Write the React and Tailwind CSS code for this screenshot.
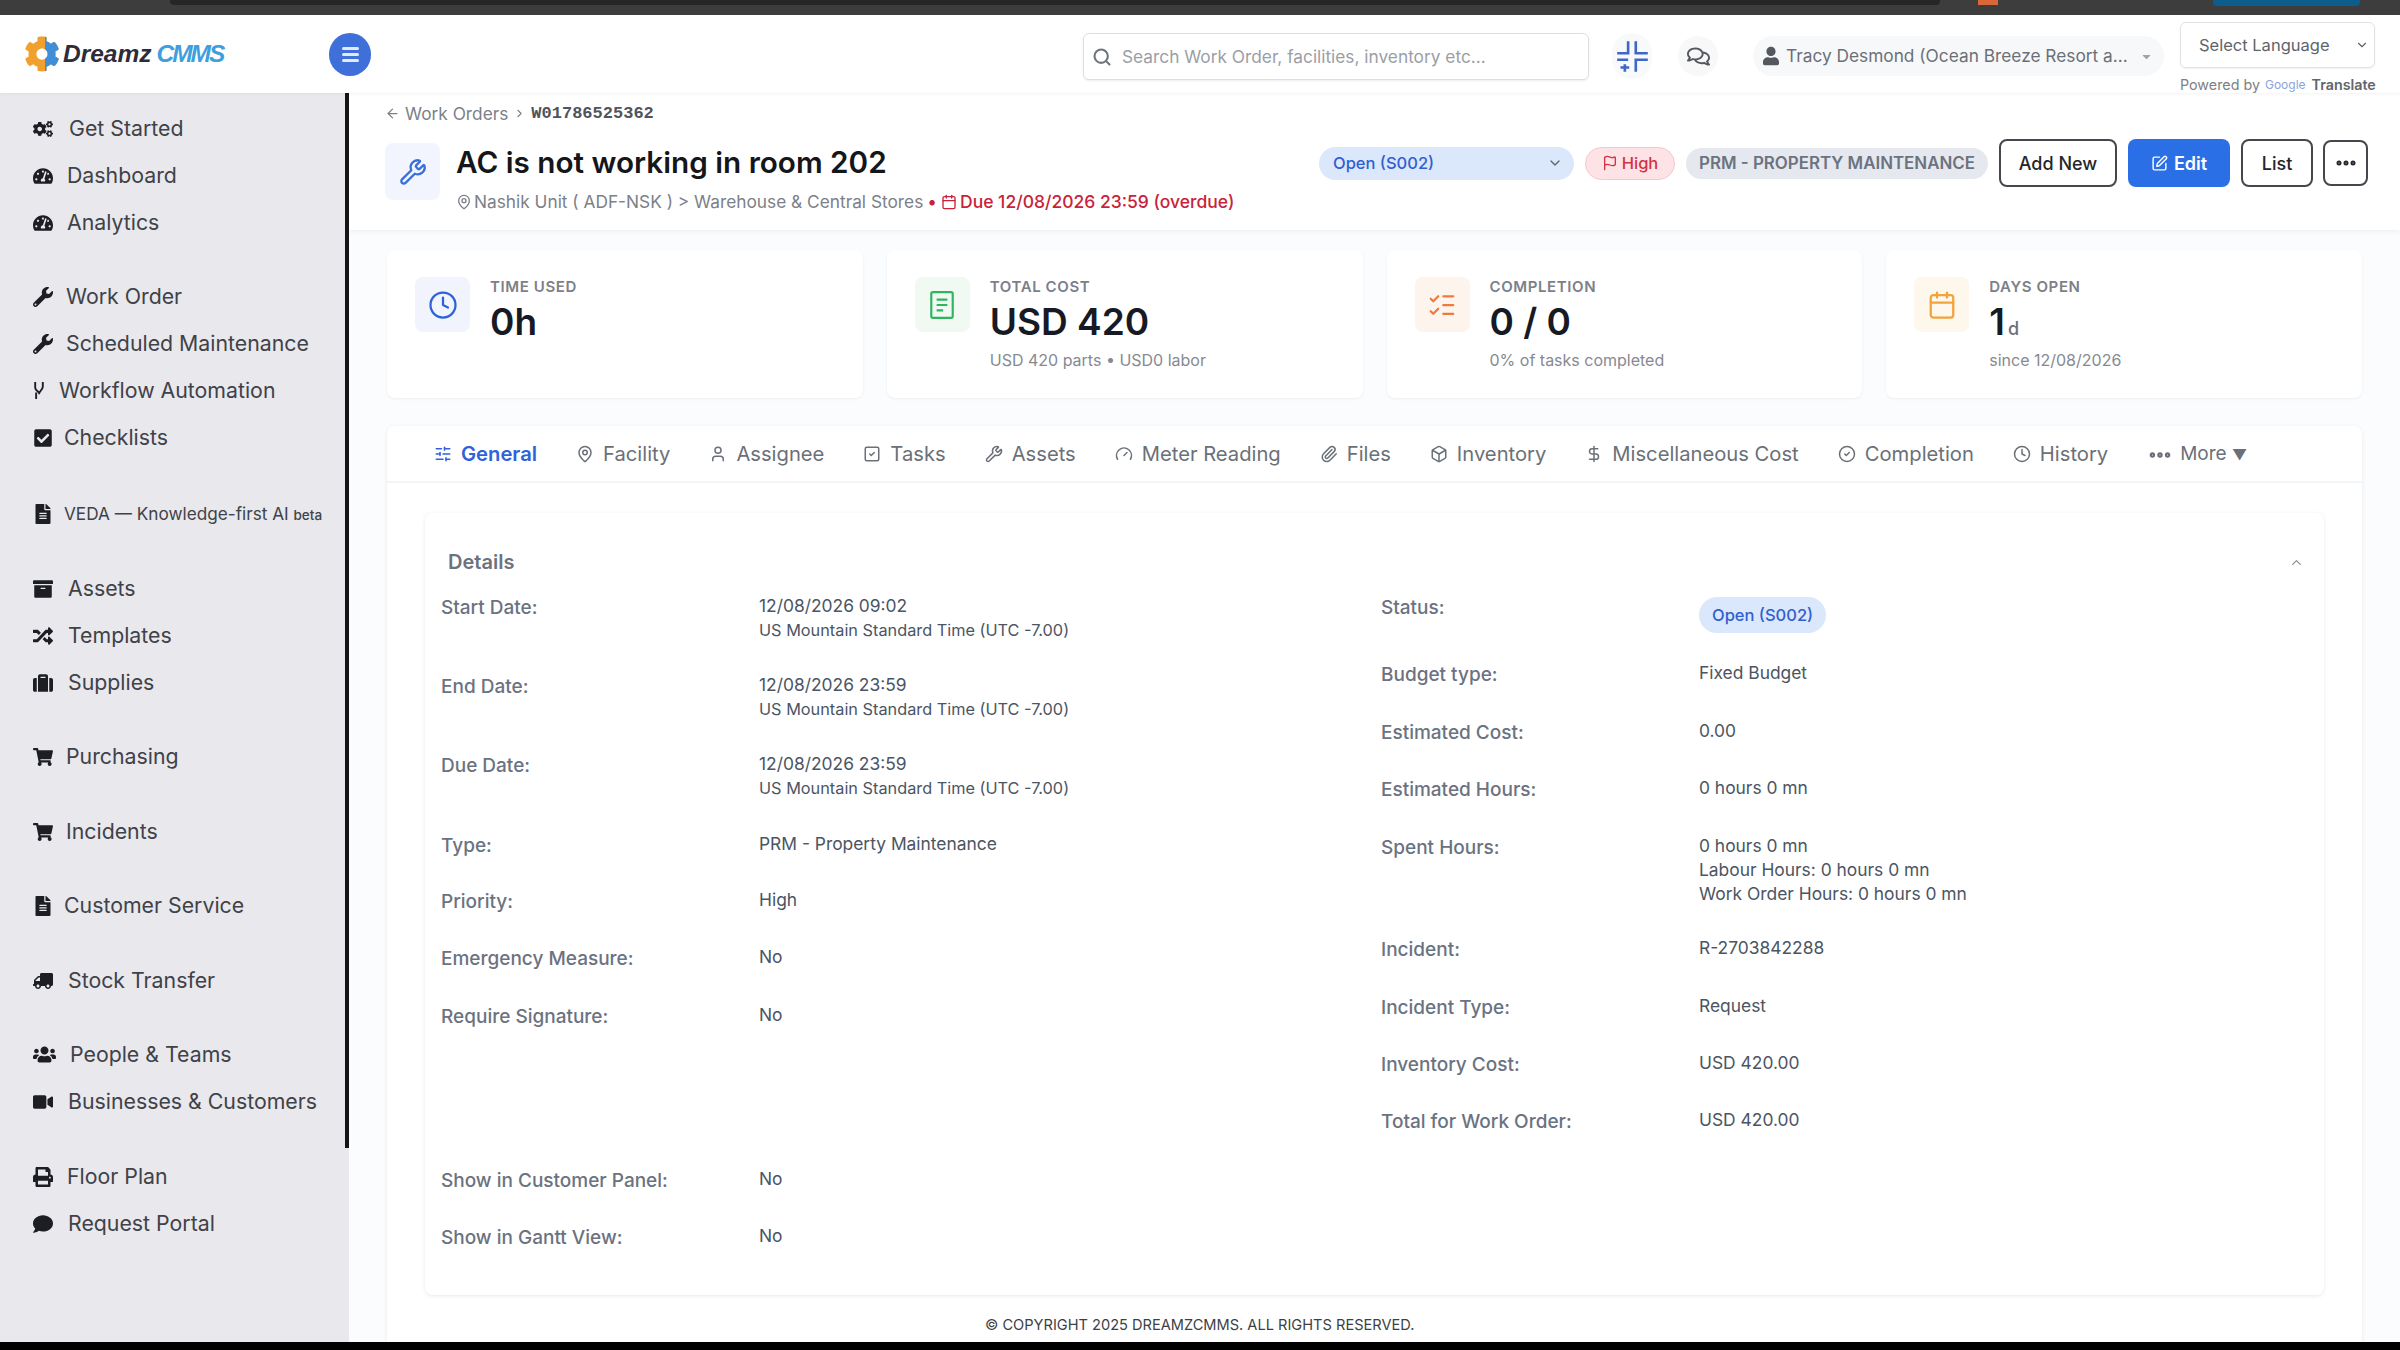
import {
  FaCogs, FaTachometerAlt, FaWrench, FaCheckSquare, FaFileAlt, FaArchive, FaRandom, FaSuitcase,
  FaShoppingCart, FaTruck, FaUsers, FaVideo, FaPrint, FaComment, FaCog, FaUser, FaCaretDown, FaRegComments,
} from "react-icons/fa";
import {
  Search, Wrench, MapPin, Calendar, Clock, ListChecks, SlidersHorizontal, User, SquareCheck,
  Gauge, Paperclip, Box, DollarSign, CircleCheck, ChevronDown, ChevronUp, Flag, SquarePen, Ellipsis,
  ArrowLeft, ChevronRight,
} from "lucide-react";

const Branch = ({ className }) => (
  <svg viewBox="0 0 12 20" className={className} fill="none" stroke="currentColor" strokeWidth="2">
    <path d="M2 1v6c0 3 3 4 4 5M10 1v5c0 3-4 5-4 8M3 12v7" />
  </svg>
);

const Compress = ({ className }) => (
  <svg viewBox="0 0 32 32" className={className} fill="none" stroke="currentColor" strokeWidth="2.4">
    <path d="M12 2v11H2M19 2v11h11M2 19h10M9 23v7M5 26h8M19 30V19h11" />
  </svg>
);

const Sheet = ({ className }) => (
  <svg viewBox="0 0 24 28" className={className} fill="none" stroke="currentColor" strokeWidth="2">
    <rect x="2" y="2" width="20" height="24" rx="1.5" />
    <path d="M7 9h10M7 14h10M7 19h6" />
  </svg>
);

const navGroups = [
  {
    mt: "",
    items: [
      { label: "Get Started", icon: FaCogs, gap: "gap-[16px]" },
      { label: "Dashboard", icon: FaTachometerAlt, gap: "gap-[14px]" },
      { label: "Analytics", icon: FaTachometerAlt, gap: "gap-[14px]" },
    ],
  },
  {
    mt: "mt-[27px]",
    items: [
      { label: "Work Order", icon: FaWrench, gap: "gap-[13px]" },
      { label: "Scheduled Maintenance", icon: FaWrench, gap: "gap-[13px]" },
      { label: "Workflow Automation", icon: Branch, gap: "gap-[14px]", small: true },
      { label: "Checklists", icon: FaCheckSquare, gap: "gap-[11px]" },
    ],
  },
  { mt: "mt-[29px]", items: [{ label: "VEDA — Knowledge-first AI", icon: FaFileAlt, gap: "gap-[11px]", veda: true }] },
  {
    mt: "mt-[28px]",
    items: [
      { label: "Assets", icon: FaArchive, gap: "gap-[15px]" },
      { label: "Templates", icon: FaRandom, gap: "gap-[15px]" },
      { label: "Supplies", icon: FaSuitcase, gap: "gap-[15px]" },
    ],
  },
  { mt: "mt-[27px]", items: [{ label: "Purchasing", icon: FaShoppingCart, gap: "gap-[13px]" }] },
  { mt: "mt-[28px]", items: [{ label: "Incidents", icon: FaShoppingCart, gap: "gap-[13px]" }] },
  { mt: "mt-[27px]", items: [{ label: "Customer Service", icon: FaFileAlt, gap: "gap-[11px]" }] },
  { mt: "mt-[28px]", items: [{ label: "Stock Transfer", icon: FaTruck, gap: "gap-[15px]", flip: true }] },
  {
    mt: "mt-[27px]",
    items: [
      { label: "People & Teams", icon: FaUsers, gap: "gap-[14px]", big: true },
      { label: "Businesses & Customers", icon: FaVideo, gap: "gap-[15px]" },
    ],
  },
  {
    mt: "mt-[28px]",
    items: [
      { label: "Floor Plan", icon: FaPrint, gap: "gap-[14px]" },
      { label: "Request Portal", icon: FaComment, gap: "gap-[15px]" },
    ],
  },
];

const stats = [
  { label: "TIME USED", value: "0h", icon: Clock, tile: "bg-[#f1f4fc]", tint: "text-[#2f62d8]" },
  { label: "TOTAL COST", value: "USD 420", sub: "USD 420 parts • USD0 labor", icon: Sheet, tile: "bg-[#f0f9f2]", tint: "text-[#2fb45f]" },
  { label: "COMPLETION", value: "0 / 0", sub: "0% of tasks completed", icon: ListChecks, tile: "bg-[#fdf4ee]", tint: "text-[#ee7a3b]" },
  { label: "DAYS OPEN", value: "1", unit: "d", sub: "since 12/08/2026", icon: Calendar, tile: "bg-[#fef7ec]", tint: "text-[#f2a33a]" },
];

const tabs = [
  { label: "General", icon: SlidersHorizontal },
  { label: "Facility", icon: MapPin },
  { label: "Assignee", icon: User },
  { label: "Tasks", icon: SquareCheck },
  { label: "Assets", icon: Wrench },
  { label: "Meter Reading", icon: Gauge },
  { label: "Files", icon: Paperclip },
  { label: "Inventory", icon: Box },
  { label: "Miscellaneous Cost", icon: DollarSign },
  { label: "Completion", icon: CircleCheck },
  { label: "History", icon: Clock },
];

const TZ = "US Mountain Standard Time (UTC -7.00)";

const leftRows = [
  { label: "Start Date:", value: "12/08/2026 09:02", sub: TZ, h: "h-[79px]" },
  { label: "End Date:", value: "12/08/2026 23:59", sub: TZ, h: "h-[79px]" },
  { label: "Due Date:", value: "12/08/2026 23:59", sub: TZ, h: "h-[80px]" },
  { label: "Type:", value: "PRM - Property Maintenance", h: "h-[56px]" },
  { label: "Priority:", value: "High", h: "h-[57px]" },
  { label: "Emergency Measure:", value: "No", h: "h-[58px]" },
  { label: "Require Signature:", value: "No", h: "h-[164px]" },
  { label: "Show in Customer Panel:", value: "No", h: "h-[57px]" },
  { label: "Show in Gantt View:", value: "No", h: "h-[57px]" },
];

const rightRows = [
  { label: "Status:", badge: "Open (S002)", h: "h-[67px]" },
  { label: "Budget type:", value: "Fixed Budget", h: "h-[58px]" },
  { label: "Estimated Cost:", value: "0.00", h: "h-[57px]" },
  { label: "Estimated Hours:", value: "0 hours 0 mn", h: "h-[58px]" },
  { label: "Spent Hours:", value: "0 hours 0 mn", lines: ["Labour Hours: 0 hours 0 mn", "Work Order Hours: 0 hours 0 mn"], h: "h-[102px]" },
  { label: "Incident:", value: "R-2703842288", h: "h-[58px]" },
  { label: "Incident Type:", value: "Request", h: "h-[57px]" },
  { label: "Inventory Cost:", value: "USD 420.00", h: "h-[57px]" },
  { label: "Total for Work Order:", value: "USD 420.00", h: "h-[57px]" },
];

const DetailRow = ({ row }) => (
  <div className={`flex ${row.h}`}>
    <div className="w-[318px] shrink-0 pt-[6px] text-[19px] leading-[24px] font-medium text-[#6b7280]">{row.label}</div>
    <div className="pt-[4px] text-[17.4px] leading-[24px] text-[#4b5563]">
      {row.badge ? (
        <span className="mt-[3px] inline-block rounded-full bg-[#dbe7fb] px-[13px] py-[6px] text-[16.5px] leading-[24px] font-medium text-[#2f5fd0]">
          {row.badge}
        </span>
      ) : (
        <div>{row.value}</div>
      )}
      {row.sub && <div className="text-[16.3px]">{row.sub}</div>}
      {row.lines && row.lines.map((l) => <div key={l}>{l}</div>)}
    </div>
  </div>
);

export default function App() {
  return (
    <div className="flex h-[1350px] w-[2400px] flex-col overflow-hidden bg-black font-['Inter',sans-serif]">
      {/* strip of the window behind */}
      <div className="flex h-[15px] shrink-0 items-start bg-[#3d3d3d]">
        <div className="ml-[170px] h-[5px] w-[1770px] rounded-b bg-[#262626]" />
        <div className="ml-[38px] h-[5px] w-[20px] bg-[#d9673a]" />
        <div className="ml-[215px] h-[6px] w-[147px] rounded-b bg-[#0c5c8e]" />
      </div>

      {/* top bar */}
      <header className="relative z-10 flex h-[78px] shrink-0 items-center bg-white shadow-[0_1px_3px_rgba(0,0,0,0.05)]">
        <div className="flex w-[329px] shrink-0 items-center pl-[24px]">
          <span className="relative mr-[3px] flex h-[36px] w-[36px] items-center justify-center">
            <FaCog className="h-[36px] w-[36px] text-[#f0a02c]" />
            <span className="absolute right-0 top-0 h-full w-[15px] overflow-hidden">
              <FaCog className="absolute right-0 top-0 h-[36px] w-[36px] text-[#3f8ed8]" />
            </span>
          </span>
          <span className="font-['Liberation_Sans',sans-serif] text-[24.5px] leading-none font-bold italic text-[#2c2c3a]">Dreamz</span>
          <span className="ml-[5px] font-['Liberation_Sans',sans-serif] text-[24.5px] leading-none font-bold tracking-[-2px] italic text-[#3f9ede]">CMMS</span>
        </div>
        <button className="flex h-[43px] w-[42px] items-center justify-center rounded-full bg-[#3f6fd8]">
          <span className="flex w-[17px] flex-col gap-[3px]">
            <span className="h-[3px] rounded-sm bg-white/85" />
            <span className="h-[3px] rounded-sm bg-white/85" />
            <span className="h-[3px] rounded-sm bg-white/85" />
          </span>
        </button>

        <div className="mt-[5px] ml-[712px] flex h-[47px] w-[506px] items-center rounded-md border border-[#dcdee3] pl-[8px] shadow-[0_1px_2px_rgba(0,0,0,0.08)]">
          <Search className="h-[20px] w-[20px] text-[#6f747c]" strokeWidth={2.5} />
          <span className="ml-[10px] text-[17.3px] text-[#9a9ea6]">Search Work Order, facilities, inventory etc...</span>
        </div>

        <div className="mt-[4px] ml-[23px] flex h-[46px] w-[40px] items-center justify-center rounded-full bg-[#f8f9fb]">
          <Compress className="h-[35px] w-[35px] text-[#3f66c9]" />
        </div>
        <div className="mt-[4px] ml-[26px] flex h-[40px] w-[40px] items-center justify-center rounded-full bg-[#f8f8f9]">
          <FaRegComments className="h-[23px] w-[23px] text-[#55595f]" />
        </div>
        <div className="mt-[4px] ml-[35px] flex h-[40px] w-[411px] items-center rounded-full bg-[#f7f8f9] pl-[10px]">
          <FaUser className="h-[20px] w-[16px] text-[#55595f]" />
          <span className="ml-[7px] text-[17.3px] whitespace-nowrap text-[#6b7078]">Tracy Desmond (Ocean Breeze Resort a...</span>
          <FaCaretDown className="ml-[12px] h-[13px] w-[13px] text-[#a0a4aa]" />
        </div>
        <div className="ml-[16px] flex flex-col self-start pt-[7px]">
          <div className="flex h-[46px] w-[195px] items-center justify-between rounded-md border border-[#e0e2e6] pr-[5px] pl-[18px] shadow-[0_1px_2px_rgba(0,0,0,0.06)]">
            <span className="text-[16.5px] text-[#5f646b]">Select Language</span>
            <ChevronDown className="h-[14px] w-[14px] text-[#5f646b]" />
          </div>
          <div className="mt-[9px] flex items-center text-[14.3px] leading-[16px] whitespace-nowrap text-[#7b7f86]">
            Powered by
            <span className="ml-[5px] text-[12px] text-[#8aa4dc]">Google</span>
            <span className="ml-[6px] font-semibold text-[#62666c]">Translate</span>
          </div>
        </div>
      </header>

      <div className="flex min-h-0 flex-1">
        {/* sidebar */}
        <aside className="relative h-[1249px] w-[349px] shrink-0 bg-[#e8e8ed] pt-[12px] pl-[33px]">
          <div className="absolute top-0 right-0 h-[1055px] w-[4px] bg-[#151515]" />
          {navGroups.map((group, i) => (
            <div key={i} className={group.mt}>
              {group.items.map((item) => {
                const Icon = item.icon;
                return (
                  <div key={item.label} className={`flex h-[47px] items-center ${item.gap} whitespace-nowrap text-[#3f4248]`}>
                    <Icon className={`shrink-0 text-[#1d1e24] ${item.small ? "h-[19px] w-[12px]" : item.big ? "h-[23px] w-[23px]" : "h-[20px] w-[20px]"} ${item.flip ? "-scale-x-100" : ""}`} />
                    {item.veda ? (
                      <span className="text-[17.2px]">
                        {item.label} <span className="text-[13.5px] font-medium">beta</span>
                      </span>
                    ) : (
                      <span className="text-[21.3px]">{item.label}</span>
                    )}
                  </div>
                );
              })}
            </div>
          ))}
        </aside>

        {/* page */}
        <main className="flex h-[1249px] min-w-0 flex-1 flex-col bg-[#fbfcfd]">
          <section className="flex h-[137px] shrink-0 flex-col bg-white pl-[36px] shadow-[0_2px_5px_rgba(0,0,0,0.05)]">
            <div className="flex h-[40px] items-center pt-[1px] text-[17.3px] text-[#7c8088]">
              <ArrowLeft className="h-[15px] w-[15px]" />
              <span className="ml-[5px]">Work Orders</span>
              <ChevronRight className="mx-[5px] h-[13px] w-[13px]" />
              <span className="font-['Liberation_Mono',monospace] text-[17px] font-bold text-[#50545b]">W01786525362</span>
            </div>
            <div className="flex items-start">
              <div className="mt-[10px] flex h-[57px] w-[55px] shrink-0 items-center justify-center rounded-lg bg-[#f2f5fd]">
                <Wrench className="h-[28px] w-[28px] text-[#3b6fd8]" />
              </div>
              <div className="mt-[9px] ml-[16px] shrink-0">
                <h1 className="text-[29.7px] leading-[40px] font-semibold whitespace-nowrap text-[#15161a]">AC is not working in room 202</h1>
                <div className="mt-[8px] flex items-center text-[17.3px] leading-[24px] whitespace-nowrap text-[#7c8088]">
                  <MapPin className="mr-[2px] h-[16px] w-[16px]" />
                  Nashik Unit ( ADF-NSK ) &gt; Warehouse &amp; Central Stores
                  <span className="mx-[4px] text-[#c8233a]">•</span>
                  <Calendar className="mr-[3px] h-[16px] w-[16px] text-[#c8233a]" />
                  <span className="text-[17.5px] font-medium text-[#c8233a]">Due 12/08/2026 23:59 (overdue)</span>
                </div>
              </div>
              <div className="mt-[6px] ml-auto flex items-center pr-[32px]">
                <div className="flex h-[33px] w-[255px] items-center justify-between rounded-full bg-[#dbe7fb] pr-[11px] pl-[14px]">
                  <span className="text-[16.5px] font-medium text-[#2f5fd0]">Open (S002)</span>
                  <ChevronDown className="h-[16px] w-[16px] text-[#5f646b]" />
                </div>
                <div className="ml-[11px] flex h-[33px] w-[90px] items-center justify-center gap-[4px] rounded-full border border-[#f7c6cb] bg-[#fde3e5] text-[16.5px] font-medium text-[#d23246]">
                  <Flag className="h-[16px] w-[16px]" />
                  High
                </div>
                <div className="ml-[11px] flex h-[31px] w-[302px] items-center justify-center rounded-full bg-[#e5e8ee] pt-[1px] text-[16.9px] font-semibold whitespace-nowrap text-[#6b7280]">
                  PRM - PROPERTY MAINTENANCE
                </div>
                <button className="ml-[11px] h-[48px] w-[118px] rounded-lg border-2 border-[#44474c] bg-white text-[18px] font-medium text-[#24262a]">Add New</button>
                <button className="ml-[11px] flex h-[48px] w-[102px] items-center justify-center gap-[6px] rounded-lg bg-[#2b6fe6] text-[18px] font-semibold text-white">
                  <SquarePen className="h-[17px] w-[17px]" />
                  Edit
                </button>
                <button className="ml-[11px] h-[48px] w-[72px] rounded-lg border-2 border-[#44474c] bg-white text-[18px] font-medium text-[#24262a]">List</button>
                <button className="ml-[10px] flex h-[46px] w-[45px] items-center justify-center rounded-lg border-2 border-[#44474c] bg-white">
                  <Ellipsis className="h-[24px] w-[24px] text-[#24262a]" strokeWidth={3} />
                </button>
              </div>
            </div>
          </section>

          <div className="flex min-h-0 flex-1 flex-col px-[38px] pt-[20px]">
            <div className="grid shrink-0 grid-cols-4 gap-[24px]">
              {stats.map((s) => {
                const Icon = s.icon;
                return (
                  <div key={s.label} className="flex h-[148px] rounded-lg bg-white pt-[27px] pl-[28px] shadow-[0_1px_3px_rgba(0,0,0,0.06)]">
                    <div className={`flex h-[55px] w-[55px] shrink-0 items-center justify-center rounded-lg ${s.tile}`}>
                      <Icon className={`h-[30px] w-[30px] ${s.tint}`} strokeWidth={1.8} />
                    </div>
                    <div className="ml-[20px]">
                      <div className="text-[15px] leading-[20px] font-semibold tracking-[0.6px] text-[#7c8088]">{s.label}</div>
                      <div className="mt-[2px] text-[37px] leading-[46px] font-semibold text-[#171a24]">
                        {s.value}
                        {s.unit && <span className="ml-[3px] text-[18px] leading-none font-medium text-[#6b7078]">{s.unit}</span>}
                      </div>
                      {s.sub && <div className="mt-[3px] text-[16px] leading-[24px] whitespace-nowrap text-[#868a91]">{s.sub}</div>}
                    </div>
                  </div>
                );
              })}
            </div>

            <div className="mt-[28px] flex min-h-0 flex-1 flex-col rounded-t-lg bg-white shadow-[0_1px_4px_rgba(0,0,0,0.08)]">
              <nav className="flex h-[57px] shrink-0 items-center gap-[39px] border-b-2 border-[#f3f4f6] pt-[2px] pl-[47px]">
                {tabs.map((t, i) => {
                  const Icon = t.icon;
                  return (
                    <div key={t.label} className={`flex items-center gap-[9px] text-[20.2px] whitespace-nowrap ${i === 0 ? "font-semibold text-[#2f62d8]" : "text-[#6b7078]"}`}>
                      <Icon className="h-[18px] w-[18px]" />
                      {t.label}
                    </div>
                  );
                })}
                <div className="flex items-center gap-[7px] text-[19px] whitespace-nowrap text-[#6b7078]">
                  <Ellipsis className="h-[26px] w-[26px]" strokeWidth={3} />
                  <span>
                    More <span className="text-[15px]">▼</span>
                  </span>
                </div>
              </nav>

              <div className="mx-[38px] mt-[30px] h-[782px] shrink-0 rounded-lg bg-white shadow-[0_1px_4px_rgba(0,0,0,0.09)]">
                <div className="flex h-[77px] items-center justify-between pr-[20px] pl-[23px]">
                  <span className="mt-[21px] text-[20px] font-semibold text-[#6b7280]">Details</span>
                  <ChevronUp className="mt-[21px] h-[15px] w-[15px] text-[#8a8e95]" />
                </div>
                <div className="flex pl-[16px]">
                  <div className="w-[940px] shrink-0">
                    {leftRows.map((r) => (
                      <DetailRow key={r.label} row={r} />
                    ))}
                  </div>
                  <div>
                    {rightRows.map((r) => (
                      <DetailRow key={r.label} row={r} />
                    ))}
                  </div>
                </div>
              </div>

              <footer className="pt-[20px] pl-[598px] text-[14.6px] leading-[20px] text-[#3c3f45]">
                © COPYRIGHT 2025 DREAMZCMMS. ALL RIGHTS RESERVED.
              </footer>
            </div>
          </div>
        </main>
      </div>
      <div className="h-[8px] shrink-0 bg-black" />
    </div>
  );
}
